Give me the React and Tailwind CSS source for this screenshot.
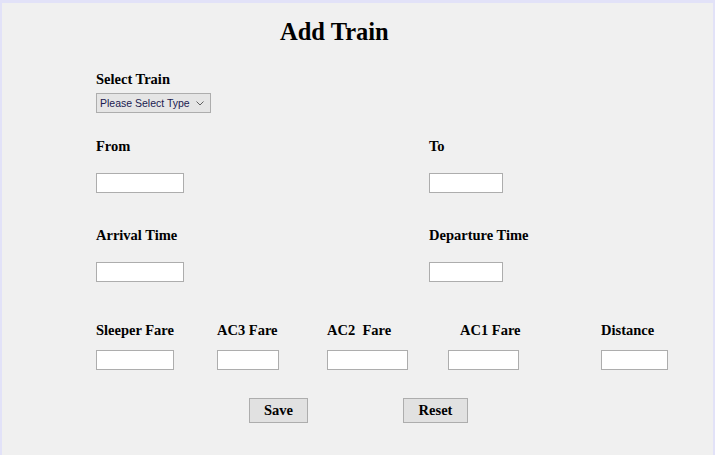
const label = "font-['Liberation_Serif',serif] font-bold text-[14.5px] leading-[17px] text-black";
const field = "block h-[20px] bg-white border border-[#adadad] outline-none";

const Field = ({ w }) => <input type="text" className={`${field} ${w}`} />;

export default function App() {
  return (
    <div className="w-[715px] h-[455px] bg-[#f0f0f0] border-t-[3px] border-x-2 border-[#e2e2f8] overflow-hidden">
      <h1 className="mt-[15px] pl-[278px] font-['Liberation_Serif',serif] font-bold text-[24.5px] leading-[28px] text-black">
        Add Train
      </h1>

      <div className="pl-[94px]">
        <div className={`mt-[25px] ${label}`}>Select Train</div>
        <div className="mt-[5px] w-[115px] h-[20px] border border-[#adadad] bg-[#e5e5e5] flex items-center pl-[3px] pr-[6px]">
          <span className="font-['Liberation_Sans',sans-serif] text-[10.5px] text-[#1a1a50] leading-none">
            Please Select Type
          </span>
          <svg className="ml-auto" width="8" height="5" viewBox="0 0 8 5">
            <path d="M0.5 0.5 L4 4 L7.5 0.5" fill="none" stroke="#606060" strokeWidth="1" />
          </svg>
        </div>

        <div className="flex mt-[25px]">
          <div className="w-[333px]">
            <div className={label}>From</div>
            <div className="mt-[18px]"><Field w="w-[88px]" /></div>
          </div>
          <div>
            <div className={label}>To</div>
            <div className="mt-[18px]"><Field w="w-[74px]" /></div>
          </div>
        </div>

        <div className="flex mt-[34px]">
          <div className="w-[333px]">
            <div className={label}>Arrival Time</div>
            <div className="mt-[18px]"><Field w="w-[88px]" /></div>
          </div>
          <div>
            <div className={label}>Departure Time</div>
            <div className="mt-[18px]"><Field w="w-[74px]" /></div>
          </div>
        </div>

        <div className="flex mt-[40px]">
          <div className="w-[121px]">
            <div className={label}>Sleeper Fare</div>
            <div className="mt-[11px]"><Field w="w-[78px]" /></div>
          </div>
          <div className="w-[110px]">
            <div className={label}>AC3 Fare</div>
            <div className="mt-[11px]"><Field w="w-[62px]" /></div>
          </div>
          <div className="w-[121px]">
            <div className={`${label} whitespace-pre`}>AC2  Fare</div>
            <div className="mt-[11px]"><Field w="w-[81px]" /></div>
          </div>
          <div className="w-[153px]">
            <div className={`${label} pl-[12px]`}>AC1 Fare</div>
            <div className="mt-[11px]"><Field w="w-[71px]" /></div>
          </div>
          <div>
            <div className={label}>Distance</div>
            <div className="mt-[11px]"><Field w="w-[67px]" /></div>
          </div>
        </div>

        <div className="flex mt-[28px] pl-[153px] gap-[95px]">
          <button className={`w-[59px] h-[25px] bg-[#e1e1e1] border border-[#adadad] ${label}`}>Save</button>
          <button className={`w-[65px] h-[25px] bg-[#e1e1e1] border border-[#adadad] ${label}`}>Reset</button>
        </div>
      </div>
    </div>
  );
}
